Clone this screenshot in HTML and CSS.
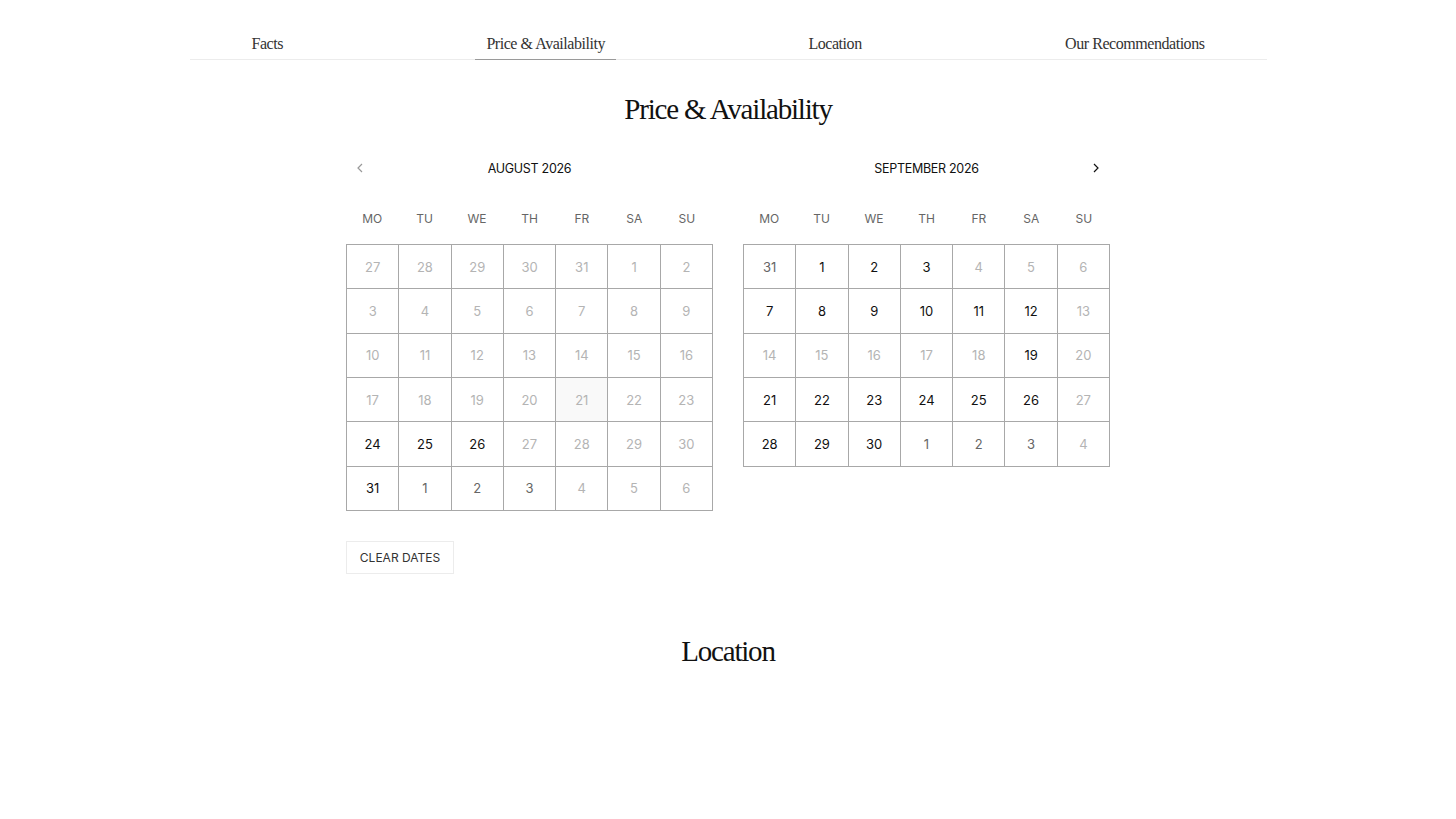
FILE: index.html
```html
<!DOCTYPE html>
<html lang="en">
<head>
<meta charset="utf-8">
<title>Price &amp; Availability</title>
<link rel="stylesheet" href="styles.css">
</head>
<body>
<div class="page">
  <nav class="tabs">
    <a class="tab">Facts</a>
    <a class="tab active">Price &amp; Availability</a>
    <a class="tab">Location</a>
    <a class="tab">Our Recommendations</a>
  </nav>

  <h2 class="section-title">Price &amp; Availability</h2>

  <div class="calendars">
    <div class="month">
      <div class="month-head">
        <span class="nav-btn prev"><svg width="6" height="10" viewBox="0 0 6 10"><path d="M5 1 L1 5 L5 9" fill="none" stroke="#999" stroke-width="1.2"/></svg></span>
        <span class="month-name">AUGUST 2026</span>
        <span class="nav-btn"></span>
      </div>
      <div class="weekdays"><span>MO</span><span>TU</span><span>WE</span><span>TH</span><span>FR</span><span>SA</span><span>SU</span></div>
      <div class="grid">
        <span class="d off">27</span><span class="d off">28</span><span class="d off">29</span><span class="d off">30</span><span class="d off">31</span><span class="d off">1</span><span class="d off">2</span>
        <span class="d off">3</span><span class="d off">4</span><span class="d off">5</span><span class="d off">6</span><span class="d off">7</span><span class="d off">8</span><span class="d off">9</span>
        <span class="d off">10</span><span class="d off">11</span><span class="d off">12</span><span class="d off">13</span><span class="d off">14</span><span class="d off">15</span><span class="d off">16</span>
        <span class="d off">17</span><span class="d off">18</span><span class="d off">19</span><span class="d off">20</span><span class="d off hover">21</span><span class="d off">22</span><span class="d off">23</span>
        <span class="d on">24</span><span class="d on">25</span><span class="d on">26</span><span class="d off">27</span><span class="d off">28</span><span class="d off">29</span><span class="d off">30</span>
        <span class="d on">31</span><span class="d mid">1</span><span class="d mid">2</span><span class="d mid">3</span><span class="d off">4</span><span class="d off">5</span><span class="d off">6</span>
      </div>
      <button class="clear">CLEAR DATES</button>
    </div>

    <div class="month">
      <div class="month-head">
        <span class="nav-btn"></span>
        <span class="month-name">SEPTEMBER 2026</span>
        <span class="nav-btn next"><svg width="6" height="10" viewBox="0 0 6 10"><path d="M1 1 L5 5 L1 9" fill="none" stroke="#111" stroke-width="1.2"/></svg></span>
      </div>
      <div class="weekdays"><span>MO</span><span>TU</span><span>WE</span><span>TH</span><span>FR</span><span>SA</span><span>SU</span></div>
      <div class="grid">
        <span class="d mid">31</span><span class="d on">1</span><span class="d on">2</span><span class="d on">3</span><span class="d off">4</span><span class="d off">5</span><span class="d off">6</span>
        <span class="d on">7</span><span class="d on">8</span><span class="d on">9</span><span class="d on">10</span><span class="d on">11</span><span class="d on">12</span><span class="d off">13</span>
        <span class="d off">14</span><span class="d off">15</span><span class="d off">16</span><span class="d off">17</span><span class="d off">18</span><span class="d on">19</span><span class="d off">20</span>
        <span class="d on">21</span><span class="d on">22</span><span class="d on">23</span><span class="d on">24</span><span class="d on">25</span><span class="d on">26</span><span class="d off">27</span>
        <span class="d on">28</span><span class="d on">29</span><span class="d on">30</span><span class="d mid">1</span><span class="d mid">2</span><span class="d mid">3</span><span class="d off">4</span>
      </div>
    </div>
  </div>

  <h2 class="section-title location">Location</h2>
</div>
</body>
</html>
```

FILE: styles.css
```css
* { box-sizing: border-box; }
html, body { margin: 0; padding: 0; background: #fff; }
body {
  font-family: Inter, "Liberation Sans", Arial, sans-serif;
  color: #111;
}
.page {
  width: 1077px;
  margin: 0 auto;
}
.tabs {
  margin-top: 32px;
  padding: 0 51px;
  display: flex;
  justify-content: space-between;
  border-bottom: 1px solid #ececec;
}
.tab {
  font-family: "Liberation Serif", "Times New Roman", serif;
  font-size: 16px;
  letter-spacing: -0.45px;
  line-height: 24px;
  padding: 0 11px 3px;
  color: #333;
  margin-bottom: -1px;
  border-bottom: 1px solid transparent;
}
.tab.active { border-bottom-color: #9a9a9a; }

.section-title {
  font-family: "Liberation Serif", "Times New Roman", serif;
  font-weight: normal;
  font-size: 29px;
  letter-spacing: -1.2px;
  line-height: 36px;
  text-align: center;
  margin: 31px 0 0;
  color: #111;
}
.section-title.location { margin-top: 59px; }

.calendars {
  margin-top: 29px;
  display: flex;
  justify-content: center;
  gap: 30px;
}
.month { width: 367px; }
.month-head {
  display: flex;
  align-items: center;
  height: 24px;
}
.nav-btn {
  width: 28px;
  height: 24px;
  display: flex;
  align-items: center;
  justify-content: center;
}
.month-name {
  flex: 1;
  text-align: center;
  font-size: 12.5px;
  color: #111;
  letter-spacing: -0.3px;
}
.weekdays {
  margin-top: 29px;
  display: grid;
  grid-template-columns: repeat(7, 1fr);
  height: 20px;
  line-height: 20px;
  font-size: 12px;
  color: #666;
  text-align: center;
}
.grid {
  margin-top: 15px;
  display: grid;
  grid-template-columns: repeat(7, 1fr);
  border-top: 1px solid #a8a8a8;
  border-left: 1px solid #a8a8a8;
}
.d {
  height: 44.33px;
  border-right: 1px solid #a8a8a8;
  border-bottom: 1px solid #a8a8a8;
  display: flex;
  align-items: center;
  justify-content: center;
  font-size: 13px;
}
.d.off { color: #b4b4b4; }
.d.mid { color: #666; }
.d.on { color: #111; }
.d.hover { background: #f9f9f9; }

.clear {
  margin-top: 30px;
  width: 108px;
  height: 33px;
  border: 1px solid #ececec;
  background: #fff;
  font-family: Inter, "Liberation Sans", Arial, sans-serif;
  font-size: 12px;
  color: #333;
  padding: 0;
  cursor: pointer;
}
```
